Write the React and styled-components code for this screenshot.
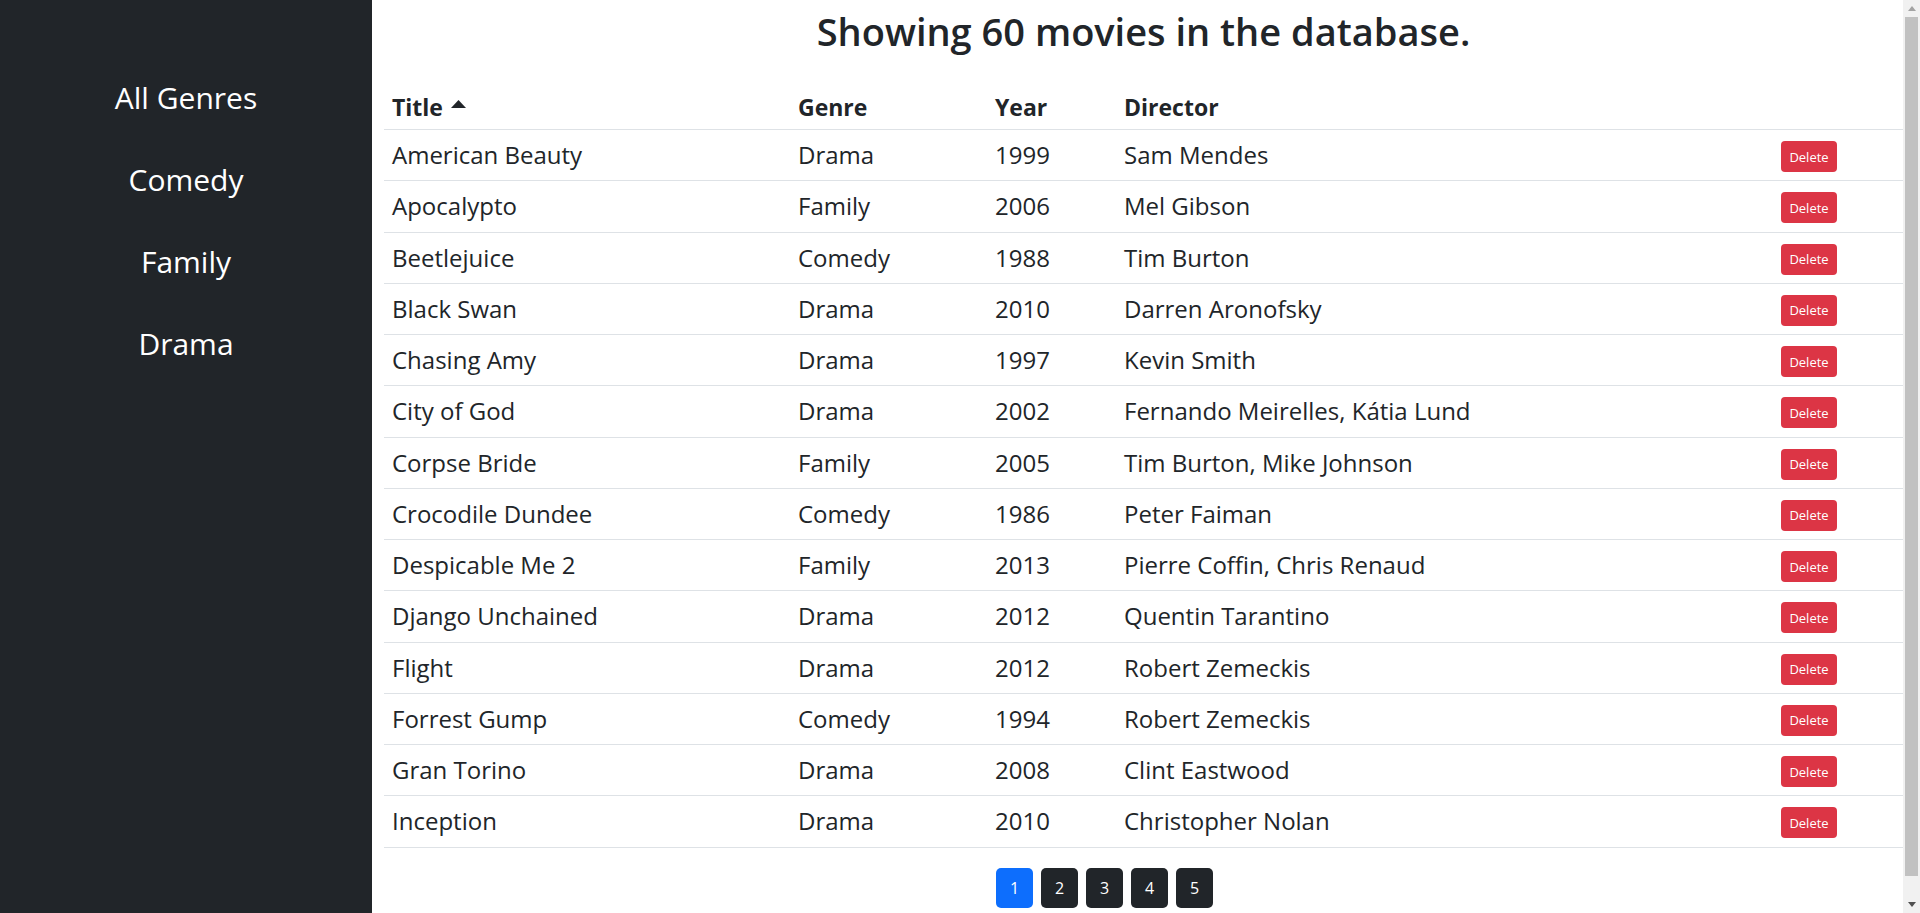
import React from "react";
import styled, { createGlobalStyle } from "styled-components";

const GlobalStyle = createGlobalStyle`
  html, body {
    margin: 0;
    padding: 0;
    overflow: hidden;
  }
  body {
    font-family: "Open Sans", "Noto Sans", sans-serif;
    color: #212529;
    background: #fff;
  }
`;

const Frame = styled.div`
  display: flex;
  height: 100vh;
`;

const Page = styled.div`
  flex: 1;
  min-width: 0;
  overflow-y: auto;
  scrollbar-width: none;
  &::-webkit-scrollbar {
    display: none;
  }
`;

const ScrollTrack = styled.div`
  width: 17px;
  flex-shrink: 0;
  background: #f1f1f1;
  display: flex;
  flex-direction: column;
  align-items: center;
`;

const ScrollArrow = styled.div`
  height: 17px;
  width: 17px;
  display: flex;
  align-items: center;
  justify-content: center;
`;

const ScrollThumb = styled.div`
  width: 13px;
  height: 859px;
  background: #c1c1c1;
`;

const ScrollSpacer = styled.div`
  flex: 1;
`;

const Layout = styled.div`
  display: flex;
  min-height: 934px;
`;

const Sidebar = styled.nav`
  width: 372px;
  flex-shrink: 0;
  background: #212529;
  display: flex;
  flex-direction: column;
  align-items: center;
  gap: 34px;
  padding-top: 74px;
  box-sizing: border-box;
`;

const GenreLink = styled.a`
  font-size: 30px;
  line-height: 48px;
  color: #fff;
  text-decoration: none;
  cursor: pointer;
`;

const Main = styled.main`
  flex: 1;
  padding-left: 12px;
  min-width: 0;
`;

const Heading = styled.h1`
  margin: 7px 0 24px;
  font-size: 38px;
  font-weight: 600;
  line-height: 48px;
  text-align: center;
`;

const Table = styled.table`
  width: 100%;
  border-collapse: collapse;
  table-layout: fixed;
  font-size: 24px;
`;

const HeadCell = styled.th`
  width: ${(p) => (p.$w ? `${p.$w}px` : "auto")};
  text-align: left;
  font-weight: 700;
  font-size: 23px;
  padding: 11px 8px 5px;
  line-height: 34px;
  border-bottom: 1px solid #dee2e6;
  white-space: nowrap;
  cursor: ${(p) => (p.$sortable ? "pointer" : "default")};
`;

const Cell = styled.td`
  padding: 8px;
  height: 34.25px;
  line-height: 34px;
  border-bottom: 1px solid #dee2e6;
  white-space: nowrap;
  box-sizing: content-box;
`;

const Caret = styled.svg`
  margin-left: 8px;
  vertical-align: 8px;
`;

const DeleteButton = styled.button`
  display: block;
  width: 56px;
  height: 31px;
  margin: 3px 0 0 2px;
  border: none;
  border-radius: 4px;
  background: #dc3545;
  color: #fff;
  font-family: inherit;
  font-size: 13px;
  padding: 0;
  cursor: pointer;
`;

const Pager = styled.div`
  display: flex;
  gap: 8px;
  padding: 20px 0 24px 612px;
`;

const PageButton = styled.button`
  width: 37px;
  height: 40px;
  border: none;
  border-radius: 5px;
  background: ${(p) => (p.$active ? "#0d6efd" : "#212529")};
  color: #fff;
  font-family: inherit;
  font-size: 16px;
  padding: 0;
  cursor: pointer;
`;

const genres = ["All Genres", "Comedy", "Family", "Drama"];

const movies = [
  ["American Beauty", "Drama", 1999, "Sam Mendes"],
  ["Apocalypto", "Family", 2006, "Mel Gibson"],
  ["Beetlejuice", "Comedy", 1988, "Tim Burton"],
  ["Black Swan", "Drama", 2010, "Darren Aronofsky"],
  ["Chasing Amy", "Drama", 1997, "Kevin Smith"],
  ["City of God", "Drama", 2002, "Fernando Meirelles, Kátia Lund"],
  ["Corpse Bride", "Family", 2005, "Tim Burton, Mike Johnson"],
  ["Crocodile Dundee", "Comedy", 1986, "Peter Faiman"],
  ["Despicable Me 2", "Family", 2013, "Pierre Coffin, Chris Renaud"],
  ["Django Unchained", "Drama", 2012, "Quentin Tarantino"],
  ["Flight", "Drama", 2012, "Robert Zemeckis"],
  ["Forrest Gump", "Comedy", 1994, "Robert Zemeckis"],
  ["Gran Torino", "Drama", 2008, "Clint Eastwood"],
  ["Inception", "Drama", 2010, "Christopher Nolan"],
];

export default function App() {
  return (
    <>
      <GlobalStyle />
      <Frame>
        <Page>
          <Layout>
            <Sidebar>
              {genres.map((g) => (
                <GenreLink key={g}>{g}</GenreLink>
              ))}
            </Sidebar>
            <Main>
              <Heading>Showing 60 movies in the database.</Heading>
              <Table>
                <thead>
                  <tr>
                    <HeadCell $w={390} $sortable>
                      Title
                      <Caret width="15" height="8" viewBox="0 0 15 8">
                        <path d="M7.5 0 L15 8 H0 Z" fill="#212529" />
                      </Caret>
                    </HeadCell>
                    <HeadCell $w={181} $sortable>Genre</HeadCell>
                    <HeadCell $w={113} $sortable>Year</HeadCell>
                    <HeadCell $w={639} $sortable>Director</HeadCell>
                    <HeadCell />
                  </tr>
                </thead>
                <tbody>
                  {movies.map(([title, genre, year, director]) => (
                    <tr key={title}>
                      <Cell>{title}</Cell>
                      <Cell>{genre}</Cell>
                      <Cell>{year}</Cell>
                      <Cell>{director}</Cell>
                      <Cell>
                        <DeleteButton>Delete</DeleteButton>
                      </Cell>
                    </tr>
                  ))}
                </tbody>
              </Table>
              <Pager>
                {[1, 2, 3, 4, 5].map((n) => (
                  <PageButton key={n} $active={n === 1}>
                    {n}
                  </PageButton>
                ))}
              </Pager>
            </Main>
          </Layout>
        </Page>
        <ScrollTrack>
          <ScrollArrow>
            <svg width="8" height="5" viewBox="0 0 8 5">
              <path d="M4 0 L8 5 H0 Z" fill="#a3a3a3" />
            </svg>
          </ScrollArrow>
          <ScrollThumb />
          <ScrollSpacer />
          <ScrollArrow>
            <svg width="8" height="5" viewBox="0 0 8 5">
              <path d="M0 0 H8 L4 5 Z" fill="#505050" />
            </svg>
          </ScrollArrow>
        </ScrollTrack>
      </Frame>
    </>
  );
}
